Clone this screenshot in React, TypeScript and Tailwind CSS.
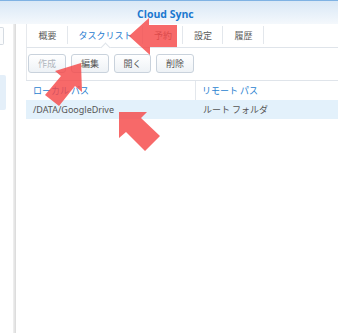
import React from "react";

const jp = { fontFamily: '"Noto Sans CJK JP", "Noto Sans", sans-serif' };

function Btn({ label, disabled, w }: { label: string; disabled?: boolean; w: string }) {
  return (
    <div
      className={`${w} h-[19px] flex items-center justify-center rounded-[3px] border border-[#c9d2dc] bg-gradient-to-b from-[#ffffff] to-[#eef2f6] text-[9px] ${disabled ? "text-[#b0b6bd]" : "text-[#555]"}`}
    >
      {label}
    </div>
  );
}

export default function App() {
  const tabs = [
    { label: "概要", w: "w-[41px]" },
    { label: "タスクリスト", w: "w-[75px]", active: true },
    { label: "予約", w: "w-[40px]" },
    { label: "設定", w: "w-[40px]" },
    { label: "履歴", w: "w-[41px]" },
  ];
  return (
    <div className="relative w-[338px] h-[333px] bg-white overflow-hidden flex flex-col" style={jp}>
      {/* title bar */}
      <div className="h-[24px] shrink-0 border-t border-[#7fb2e3] bg-gradient-to-b from-[#d9e8f6] to-[#f4f8fc] flex items-center pl-[137px] pt-[4px]">
        <span className="text-[10.5px] font-bold text-[#1b78cf] leading-none" style={{ fontFamily: '"Open Sans", "Liberation Sans", sans-serif' }}>
          Cloud Sync
        </span>
      </div>
      <div className="flex flex-1">
        {/* sidebar */}
        <div className="w-[13px] shrink-0 bg-white flex flex-col">
          <div className="mt-[3px] h-[18px] w-[4px] border border-l-0 border-[#d5dbe2] bg-[#fbfcfd] rounded-r-[2px]" />
          <div className="mt-[30px] h-[35px] w-[6px] bg-[#e4eff9] rounded-r-[2px]" />
        </div>
        <div className="w-[3px] shrink-0 bg-gradient-to-r from-[#f1f1f1] to-[#d9d9d9]" />
        {/* main */}
        <div className="flex-1 pl-[10px] flex flex-col">
          {/* tabs */}
          <div className="h-[24px] flex border-b border-[#dfe4ea] border-l border-l-[#e6e9ed] relative">
            {tabs.map((t) => (
              <div key={t.label} className={`${t.w} relative flex items-center justify-center`}>
                <span className={`text-[9px] ${t.active ? "text-[#1f7bd0]" : "text-[#5a5a5a]"}`}>{t.label}</span>
                <div className="absolute right-0 top-[2px] bottom-[3px] w-px bg-[#e3e7ec]" />
                {t.active && (
                  <div className="absolute left-[34px] bottom-[-4px] w-[7px] h-[7px] rotate-45 bg-white border-l border-t border-[#dfe4ea]" />
                )}
              </div>
            ))}
          </div>
          {/* toolbar */}
          <div className="h-[32px] flex items-start pt-[6px] gap-[5px] border-l border-[#e6e9ed] pl-[1px]">
            <Btn label="作成" disabled w="w-[38px]" />
            <Btn label="編集" w="w-[38px]" />
            <Btn label="開く" w="w-[37px]" />
            <Btn label="削除" w="w-[38px]" />
          </div>
          {/* grid */}
          <div className="border-t border-[#dfe4ea]">
            <div className="h-[19px] flex text-[9px] text-[#2a7fd0]">
              <div className="w-[170px] pl-[7px] flex items-center border-r border-[#e3e7ec]">ローカル パス</div>
              <div className="pl-[6px] flex items-center">リモート パス</div>
            </div>
            <div className="h-[19px] flex text-[9px] text-[#555] bg-[#e3f1fb]">
              <div className="w-[170px] pl-[7px] flex items-center" style={{ fontFamily: '"Noto Sans", "Liberation Sans", sans-serif' }}>/DATA/GoogleDrive</div>
              <div className="pl-[7px] flex items-center">ルート フォルダ</div>
            </div>
          </div>
        </div>
      </div>
      {/* annotation arrows */}
      <svg className="absolute left-0 top-0 pointer-events-none" width="338" height="333">
        <g fill="#f54848" fillOpacity="0.82">
          <polygon points="129,36 149,18 149,25 177,25 177,47 150,47 150,55" />
          <polygon points="81,63 55,71 61,76 45,95 59,106 75,86 82,92" />
          <polygon points="119,112 147,112 141,118 160,136 145,151 126,132 119,138" />
        </g>
      </svg>
    </div>
  );
}
